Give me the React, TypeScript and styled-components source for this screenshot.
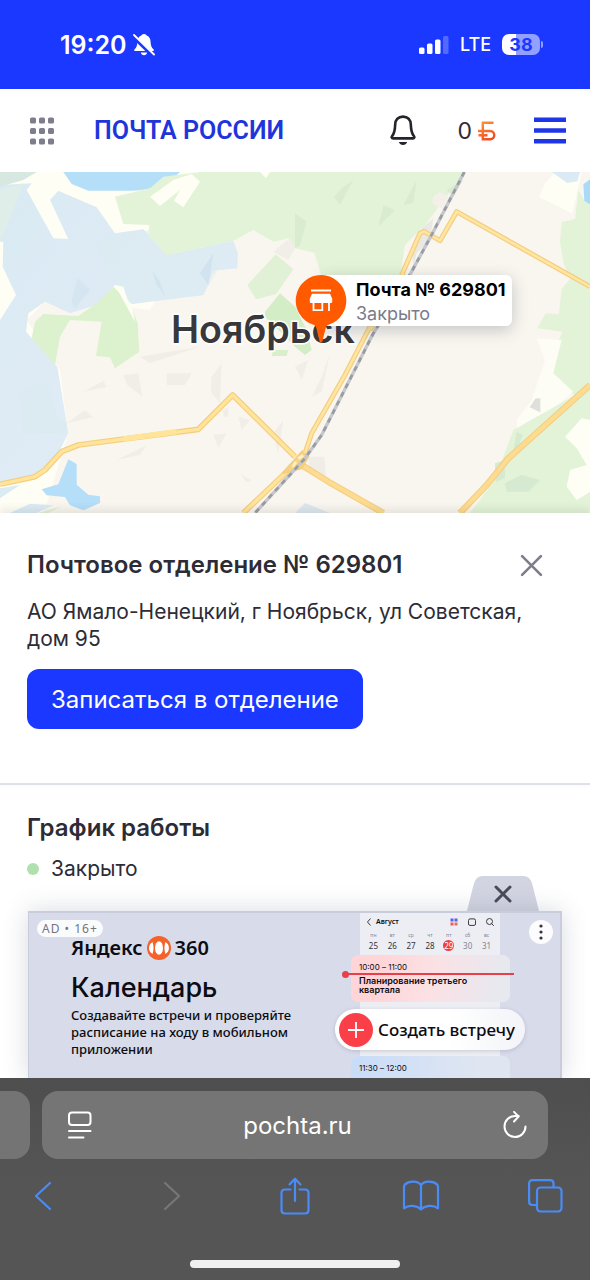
import React from "react";
import styled, { createGlobalStyle } from "styled-components";

const BLUE = "#1a38ff";
const INK = "#2d2c36";
const UI_FONT = `Inter, "Noto Sans", sans-serif`;
const AD_FONT = `"Noto Sans", "Open Sans", sans-serif`;

const GlobalStyle = createGlobalStyle`
  *, *::before, *::after { box-sizing: border-box; }
  body { margin: 0; background: #fff; color: ${INK}; font-family: ${UI_FONT}; }
  h1, h2, p { margin: 0; }
  button { padding: 0; border: 0; background: none; color: inherit; font: inherit; cursor: pointer; }
  svg { display: block; flex: none; }
`;

const Screen = styled.div`
  display: flex;
  flex-direction: column;
  height: 100vh;
`;

/* Phone status bar */

const StatusBar = styled.div`
  display: flex;
  align-items: center;
  justify-content: space-between;
  flex: none;
  height: 89px;
  padding: 0 47px 0 60px;
  background: ${BLUE};
  color: #fff;
`;

const StatusGroup = styled.div<{ $gap: number }>`
  display: flex;
  align-items: center;
  gap: ${(p) => p.$gap}px;
`;

const Clock = styled.time`
  font-size: 25px;
  font-weight: 600;
`;

const Network = styled.span`
  font-size: 18px;
  font-weight: 500;
`;

const Battery = styled.div`
  position: relative;
  width: 38px;
  height: 21px;
  margin-right: 3px;
  border-radius: 7px;
  background: linear-gradient(90deg, #fff 38%, #92a0ff 38%);
  color: ${BLUE};
  font-size: 18px;
  font-weight: 700;
  line-height: 21px;
  text-align: center;

  &::after {
    content: "";
    position: absolute;
    top: 7px;
    right: -3px;
    width: 2px;
    height: 7px;
    border-radius: 0 2px 2px 0;
    background: #92a0ff;
  }
`;

/* Site header */

const Header = styled.header`
  display: flex;
  align-items: center;
  flex: none;
  height: 83px;
  padding: 0 24px 0 30px;
  background: #fff;
`;

const Brand = styled.a`
  margin-left: 40px;
  color: #1f35dc;
  font-family: Roboto, sans-serif;
  font-size: 25px;
  font-weight: 600;
  line-height: 32px;
  text-decoration: none;
  white-space: nowrap;
`;

const HeaderActions = styled.div`
  display: flex;
  align-items: center;
  gap: 38px;
  margin-left: auto;
`;

const Bonus = styled.button`
  display: flex;
  align-items: center;
  gap: 6px;
  padding-left: 3px;
  font-size: 23px;
`;

/* Scrolling page and its map */

const Page = styled.div`
  position: relative;
  flex: 1;
  min-height: 0;
  overflow: hidden;
`;

const MapArea = styled.section`
  position: relative;

  > svg { width: 100%; height: auto; }
`;

const Marker = styled.button`
  position: absolute;
  top: 103px;
  left: 50%;
  display: flex;
  text-align: left;
`;

const MarkerPin = styled.span`
  position: relative;
  z-index: 1;
  width: 52px;
  height: 68px;
`;

const MarkerLabel = styled.span`
  display: flex;
  flex-direction: column;
  height: 51px;
  margin-left: -26px;
  padding: 3px 6px 0 35px;
  border-radius: 6px;
  background: #fff;
  box-shadow: 0 4px 16px rgba(40, 50, 80, 0.25);
  white-space: nowrap;
`;

const MarkerTitle = styled.strong`
  color: #000;
  font-size: 18px;
  font-weight: 700;
  line-height: 24px;
`;

const MarkerState = styled.span`
  color: #7b7b8a;
  font-size: 18px;
  line-height: 24px;
`;

/* Office card */

const Office = styled.section`
  position: relative;
  padding: 36px 28px 54px 27px;
  border-bottom: 2px solid #dfe1ea;
  background: #fff;
  box-shadow: 0 -4px 8px rgba(60, 60, 60, 0.1);
`;

const OfficeHead = styled.div`
  display: flex;
  align-items: center;
  justify-content: space-between;
  padding-right: 19px;
`;

const Title = styled.h2`
  font-size: 24px;
  font-weight: 600;
  line-height: 32px;
`;

const Address = styled.p`
  margin: 17px 0;
  font-size: 21px;
  line-height: 27px;
`;

const BookButton = styled.button`
  height: 60px;
  padding: 0 24px;
  border-radius: 12px;
  background: ${BLUE};
  color: #fff;
  font-size: 24px;
`;

const Schedule = styled.section`
  padding: 27px;
`;

const OpenState = styled.p`
  display: flex;
  align-items: center;
  gap: 12px;
  margin-top: 12px;
  font-size: 21px;
  line-height: 26px;

  &::before {
    content: "";
    width: 12px;
    height: 12px;
    border-radius: 50%;
    background: #b0e0ae;
  }
`;

/* Advertisement pinned over the page */

const AdDock = styled.aside`
  position: absolute;
  right: 28px;
  bottom: 0;
  left: 28px;
  display: flex;
  flex-direction: column;
  height: 202px;
`;

const AdClose = styled.button`
  align-self: flex-end;
  margin-right: 23px;
`;

const AdBody = styled.div`
  display: flex;
  justify-content: space-between;
  position: relative;
  flex: 1;
  min-height: 0;
  padding: 0 60px 0 42px;
  border: solid #c9cddb;
  border-width: 2px 2px 0 1px;
  background: #d8dbe9;
  box-shadow: 0 0 24px rgba(60, 70, 100, 0.2);
  font-family: ${AD_FONT};
  color: #0c0c12;
`;

const AdTag = styled.span`
  position: absolute;
  top: 7px;
  left: 8px;
  padding: 0 5px;
  border-radius: 9px;
  background: #fafbfd;
  color: #74747c;
  font-size: 12px;
  letter-spacing: 1px;
  line-height: 17px;
`;

const AdMenu = styled.button`
  position: absolute;
  top: 7px;
  right: 7px;
`;

const AdCopy = styled.div`
  padding-top: 21px;
`;

const AdBrand = styled.div`
  display: flex;
  align-items: center;
  gap: 4px;
  font-size: 20px;
  font-weight: 600;
  line-height: 28px;
`;

const AdTitle = styled.h2`
  margin: 10px 0 3px;
  font-family: ${UI_FONT};
  font-size: 27px;
  font-weight: 500;
  line-height: 32px;
`;

const AdText = styled.p`
  width: 240px;
  font-size: 13px;
  font-weight: 500;
  line-height: 17px;
`;

const Phone = styled.div`
  display: flex;
  flex-direction: column;
  align-items: stretch;
  width: 140px;
  height: 100%;
  background: #eceef3;
`;

const PhoneHead = styled.div`
  display: flex;
  align-items: center;
  gap: 4px;
  padding: 3px 6px 0;
  font-size: 7px;
  font-weight: 600;
  line-height: 12px;
`;

const PhoneTools = styled.span`
  display: flex;
  gap: 10px;
  margin-left: auto;
`;

const Week = styled.table`
  width: 132px;
  margin: 3px 4px 2px;
  border-collapse: collapse;
  table-layout: fixed;
  font-size: 8px;
  text-align: center;

  th { padding: 0; color: #85858f; font-size: 5px; font-weight: 400; line-height: 8px; }
  td { padding: 0; line-height: 14px; }
`;

const Day = styled.span<{ $today?: boolean; $weekend?: boolean }>`
  display: inline-block;
  width: 11px;
  border-radius: 50%;
  background: ${(p) => (p.$today ? "#ef3b45" : "transparent")};
  color: ${(p) => (p.$today ? "#fff" : p.$weekend ? "#85858f" : "#33333b")};
  line-height: 11px;
`;

const EventCard = styled.div<{ $tone: "red" | "blue" }>`
  position: relative;
  flex: none;
  height: 47px;
  margin: 0 -10px 0 -9px;
  padding: 7px 8px;
  border-radius: 7px;
  background: ${(p) =>
    p.$tone === "red"
      ? "linear-gradient(100deg, #ffd5d8 20%, #fbe1e4 50%, #e8e8ef 90%)"
      : "linear-gradient(100deg, #c8dcf8, #e0e6f1 80%)"};
  font-family: ${UI_FONT};
  font-size: 8px;
  line-height: 10px;
`;

const EventTime = styled.div`
  margin-bottom: 4px;
`;

const EventName = styled.strong`
  display: block;
  font-size: 9px;
  font-weight: 600;
  line-height: 9px;
`;

const NowLine = styled.span`
  position: absolute;
  top: 18px;
  right: -4px;
  left: -6px;
  height: 2px;
  background: #e8404a;

  &::before {
    content: "";
    position: absolute;
    top: -2px;
    left: -3px;
    width: 7px;
    height: 7px;
    border-radius: 50%;
    background: #e8404a;
  }
`;

const CreateButton = styled.button`
  display: flex;
  align-items: center;
  gap: 5px;
  flex: none;
  height: 41px;
  margin: 7px -25px 6px -25px;
  padding: 0 4px;
  border-radius: 21px;
  background: linear-gradient(90deg, #fff 60%, #f3f4f8);
  box-shadow: 0 1px 4px rgba(60, 60, 90, 0.2);
  font-size: 17px;
  font-weight: 500;
  white-space: nowrap;
`;

/* Browser controls */

const BrowserBar = styled.footer`
  display: flex;
  flex-direction: column;
  flex: none;
  gap: 17px;
  height: 202px;
  padding: 13px 0 12px;
  background: linear-gradient(#4e4e4e 0, #555 50%);
`;

const TabStrip = styled.div`
  display: flex;
  gap: 12px;
  padding-right: 42px;
`;

const PreviousTab = styled.div`
  width: 30px;
  height: 68px;
  border-radius: 0 16px 16px 0;
  background: #747474;
`;

const AddressBar = styled.div`
  display: flex;
  align-items: center;
  flex: 1;
  min-width: 0;
  height: 68px;
  padding: 0 20px 0 25px;
  border-radius: 16px;
  background: #757575;
  color: #fff;
`;

const UrlInput = styled.input`
  flex: 1;
  min-width: 0;
  border: 0;
  outline: 0;
  background: none;
  color: #fff;
  font-family: ${UI_FONT};
  font-size: 24px;
  text-align: center;
`;

const Toolbar = styled.nav`
  display: flex;
  align-items: center;
  justify-content: space-between;
  height: 40px;
  padding: 0 25px;
  color: #4a8cf7;
`;

const ToolButton = styled.button`
  display: flex;
  justify-content: center;
  width: 38px;

  &:disabled { color: #777; }
`;

const HomeIndicator = styled.div`
  align-self: center;
  width: 210px;
  height: 8px;
  margin-top: auto;
  border-radius: 4px;
  background: #f0f0f0;
`;

const MutedBell = () => (
  <svg width="22" height="23" viewBox="0 0 22 23" fill="none">
    <path d="M11 1c-1.600 0-2.300.8-2.700 1.500C5.500 3.400 4.500 6 4.400 9c-.2 4-1 5.500-2.800 7.200-.8.800-.4 1.800.6 1.800h17.600c1 0 1.400-1 .6-1.800-1.800-1.700-2.600-3.200-2.800-7.200-.1-3-1.100-5.600-3.900-6.500C13.300 1.800 12.600 1 11 1Z" fill="#fff" />
    <path d="M7.800 19.500h6.400c-.4 1.800-1.600 2.700-3.200 2.700s-2.800-.9-3.200-2.700Z" fill="#fff" />
    <path d="M0 3.200 20 22.500" stroke={BLUE} strokeWidth="4.200" />
    <path d="m1 2 20 19.500" stroke="#fff" strokeWidth="1.800" strokeLinecap="round" />
  </svg>
);

const Signal = () => (
  <svg width="30" height="20" viewBox="0 0 30 20" fill="#fff">
    <rect x="0" y="12.500" width="5.500" height="6.500" rx="1.500" />
    <rect x="8" y="8.500" width="5.500" height="10.500" rx="1.500" />
    <rect x="16" y="4.500" width="5.500" height="14.500" rx="1.500" />
    <rect x="24" y="1" width="5.500" height="18" rx="1.500" opacity=".25" />
  </svg>
);

const AppsIcon = () => (
  <svg width="24" height="28" viewBox="0 0 24 28" fill="#7d7d8c">
    {[0, 9, 18].map((x) =>
      [0.5, 11, 21.5].map((y) => <rect key={`${x}-${y}`} x={x} y={y} width="6" height="6" rx="1.600" />)
    )}
  </svg>
);

const BellIcon = () => (
  <svg width="26" height="31" viewBox="0 0 26 31" fill="none">
    <path d="M13 1.600c-4.800 0-7.600 3.200-7.800 7.800-.2 5.600-.6 8.600-2.900 11.400-1.200 1.500-.6 2.600.8 2.600h19.800c1.400 0 2-1.100.8-2.600-2.300-2.800-2.700-5.800-2.900-11.400-.2-4.600-3-7.800-7.800-7.800Z" stroke="#24242c" strokeWidth="2.600" strokeLinejoin="round" />
    <path d="M8.800 27h8.400c-.8 1.900-2.200 3-4.200 3s-3.400-1.100-4.200-3Z" fill="#24242c" />
  </svg>
);

const BonusIcon = () => (
  <svg width="18" height="20" viewBox="0 0 18 20" fill="none" stroke="url(#bonus)" strokeWidth="2.400">
    <defs>
      <linearGradient id="bonus" gradientUnits="userSpaceOnUse" x1="0" y1="0" x2="10" y2="20">
        <stop stopColor="#ff9a3c" />
        <stop offset="1" stopColor="#f04a24" />
      </linearGradient>
    </defs>
    <path d="M15.500 1.800H4.800v16.400h7.400c5.400 0 5.400-8.200 0-8.200H0M.5 14.300h9" />
  </svg>
);

const MenuIcon = () => (
  <svg width="32" height="27" viewBox="0 0 32 27" fill="#1f35e8">
    <path d="M0 .5h32V5H0zM0 11.300h32v4.500H0zM0 22h32v4.500H0z" />
  </svg>
);

const CloseIcon = ({ size, color, weight }: { size: number; color: string; weight: number }) => (
  <svg width={size} height={size} viewBox="0 0 22 22" fill="none" stroke={color} strokeWidth={weight} strokeLinecap="round">
    <path d="m2 2 18 18M20 2 2 20" />
  </svg>
);

const CityMap = () => (
  <svg viewBox="0 6 1770 1023" role="img" aria-label="Карта Ноябрьска">
    <defs>
      <linearGradient id="lake" x2="1" y2="1">
        <stop stopColor="#d9eaf3" />
        <stop offset=".5" stopColor="#dfebf5" />
        <stop offset="1" stopColor="#dcebf2" />
      </linearGradient>
    </defs>
    <rect width="1770" height="1035" fill="#f9f6ef" />
    <path d="M0 0h700L450 420 150 380 80 450 180 600 205 790 130 1035H0Z" fill="#fefef5" />
    <path d="M0 45 95 40 80 60 160 205 205 207 150 90 175 62 290 112 345 190 430 178 500 255 700 212 714 250 712 295 640 302 610 375 395 402 345 345 290 405 210 430 135 395 85 430 78 485 172 590 205 790 175 850 120 915 0 945V450L48 375 8 290 10 215H0Z" fill="url(#lake)" />
    <path d="M0 6h110L70 30 0 50Z" fill="#d6e8df" />
    <path d="M0 60 70 40 40 120 0 215Z" fill="#dfeee8" />
    <path d="M60 660 140 640 170 740 200 760 200 790 70 790Z" fill="#d9e9f0" opacity=".5" />
    <path d="M290 210 450 180 500 258 700 215 610 375 395 402 345 345Z" fill="#dbebf0" opacity=".5" />
    <path d="M232 325 270 360 225 415 215 395Z" fill="#cddff0" opacity=".5" />
    <path d="M640 250 625 345 600 310Z" fill="#c9dcef" opacity=".6" />
    <path d="M455 300 470 345 495 378 480 335Z" fill="#cddff0" opacity=".6" />
    <path d="M190 6h350c-40 40-90 56-150 56H265L215 42Z" fill="#b5def8" />
    <path d="M345 80 450 55 490 20 600 6H1395L1275 165 1215 225 1200 320H965L943 248 885 235 865 205 820 215 760 180 700 212 500 256 445 195 448 165 370 162Z" fill="#e3f3d8" />
    <path d="M450 80 520 30 575 12 600 35 550 112 522 92 540 60 480 108ZM780 6h30L798 25Z" fill="#fefef5" />
    <path d="m1030 50 30-20-40 75-18-25ZM1210 105l40-75-10 70ZM1135 170l15-65 35 15ZM885 130l35 25-20 70-15 10ZM1340 60l50-30-30 50Z" fill="#daecd0" />
    <path d="m1300 80 20-14 25 14-13 40-35-20Z" fill="#f4f0e9" />
    <path d="m742 345 85-92 53 45-52 75-60 15Z" fill="#e1f1d5" />
    <path d="m795 425 45-55 45 40 35 70 15 60-20 15-30-25-40-40-50-50Z" fill="#d3eec6" />
    <path d="M820 540h45l-5 18h-45Z" fill="#d8efcb" />
    <path d="M130 432 235 438 290 400 340 350 390 400 413 460 418 545 345 595 330 562 288 558 305 455 210 450 180 500 165 585 95 505 105 455Z" fill="#dcf2ce" />
    <path d="m345 345 25 5 15 45 10 10 10 50Z" fill="#fefef5" />
    <path d="m205 868 25 14v62l35 30 35 5v20l-50 22-40-15-15-25-55-5-15-18 50-15Z" fill="#b5def8" />
    <path d="M0 955 60 945 0 985ZM30 1029l60-28 70 5-50 23Z" fill="#dbebf4" />
    <path d="m115 1029 70-20-40 20Z" fill="#dff1d3" />
    <path d="M250 665 310 632 320 650ZM370 615l45-5 12 70-45-35ZM500 610h75l-20 35h-55ZM635 620l30-40-5 120-28-35ZM350 870l90-45-20 30ZM720 910l35 22-15 5ZM420 560l180-30-150 50ZM200 760l55-40 25 22ZM640 795l40-5-25 45ZM715 740l35 10-25 30ZM820 790l30-40-15 100ZM670 720l15-10v30h-15Z" fill="#f1eee8" />
    <path d="M850 220 870 205 884 235 865 270 820 245ZM885 590l40-20-20 60ZM935 680l30-60 25-70-25 115Z" fill="#f1eee7" />

    <g transform="translate(885 0)">
      <path d="M750 40 780 6h80l-8 35-20 90-40-20-60-30Z" fill="#fefef5" />
      <path d="M770 6h85l-8 28-30 5Z" fill="#dbeaf5" />
      <path d="m850 60 20 35 15 5v600l-55-30-65-60 12-65 25-60-75-10 25-45 40 2 8-75 25-30-20-50-10-60 5-60 40-10Z" fill="#e2f3d7" />
      <path d="m865 43 20-15v75l-17-10Z" fill="#a9dbf9" />
      <path d="m725 505 75 5-25 100 60 55-115 95-50 40-5-50 45-60 40-120Z" fill="#fdfdf5" />
      <path d="M655 780 885 650V1035H520L600 930Z" fill="#e2f3d7" />
      <path d="m810 800 50-55 25 5v150l10 60-50 30-30-40 10-50 50-15-30-50Z" fill="#fefef5" />
      <path d="m630 940 50-25 55 15-35 35h-65ZM600 880l30-10v55l-28 10ZM665 785l18 10-15 40-15 20Z" fill="#d5ead0" />
      <path d="M722 685h14v42l-32-15Z" fill="#e0dfdb" />
      <path d="m0 1029 30-30 75 30Z" fill="#dde8ee" />
      <path d="M385 170 415 145 405 210 365 250 355 290 350 240Z" fill="#e2e2de" opacity=".7" />
      <path d="M38 860h50l5 60-45-5Z" fill="#f0ede6" />

      <g fill="none" strokeLinejoin="round">
        <g stroke="#f4cd7f">
          <path d="m320 315 55-125 12-6 48 28 50-87 400 225M225 470 150 615 50 790 30 850" strokeWidth="15" />
          <path d="m325 310-100 170" strokeWidth="15" />
          <path d="M885 645 640 865 575 945 495 1029M20 885l80 50 165 94" strokeWidth="19" />
        </g>
        <g stroke="#fee6a1">
          <path d="m320 315 55-125 12-6 48 28 50-87 400 225M225 470 150 615 50 790 30 850" strokeWidth="8" />
          <path d="m325 310-100 170" strokeWidth="8" />
          <path d="M885 645 640 865 575 945 495 1029M20 885l80 50 165 94" strokeWidth="13" stroke="#fddb90" />
        </g>
      </g>
    </g>

    <g fill="none" strokeLinejoin="round">
      <path d="M0 943 105 920 135 900 185 845 235 825 595 778 698 675 885 860M730 1029 850 915 915 845" stroke="#f4cd7f" strokeWidth="17" />
      <path d="M0 943 105 920 135 900 185 845 235 825 595 778 698 675 885 860M730 1029 850 915 915 845" stroke="#ffe49a" strokeWidth="10" />
      <path d="m370 807 160-22" stroke="#ffe49a" strokeWidth="16" />
      <path d="m850 910 55-65 20 15-20 35-40 10Z" fill="#fbd37d" stroke="#f4cd7f" strokeWidth="5" />
      <path d="m878 890 10-14M895 866l14-10" stroke="#fff3cc" strokeWidth="8" />
      <path d="M1393 6 1292 200 1232 310 1120 490 965 795 915 865 765 1029" stroke="#c5c7cc" strokeWidth="10" />
      <path d="M1393 6 1292 200 1232 310 1120 490 965 795 915 865 765 1029" stroke="#999ca2" strokeWidth="8" strokeDasharray="15 14" />
    </g>

    <text x="513" y="520" fill="#38383b" stroke="#fff" strokeWidth="9" paintOrder="stroke" fontFamily="Inter, sans-serif" fontSize="113" fontWeight="600">
      Ноябрьск
    </text>
  </svg>
);

const OfficePin = () => (
  <svg width="52" height="68" viewBox="0 0 52 68">
    <path d="M26 0a25.500 25.500 0 0 1 7.500 49.800c-2.200.8-2.600 2-3 4L27.500 66c-.4 2-2.600 2-3 0l-3-12.200c-.4-2-.8-3.200-3-4A25.500 25.500 0 0 1 26 0Z" fill="#ff5a00" />
    <path d="M16 14.500h20v2H16z" fill="#fff" />
    <path d="M17 18.800h18l2.200 5v2.600c0 1-.8 1.600-1.700 1.600h-19c-1 0-1.700-.6-1.700-1.600v-2.600Z" fill="#fff" />
    <path d="M18.500 27v8.200h8.800V27M34 27v8.900" stroke="#fff" strokeWidth="1.800" fill="none" />
  </svg>
);

const AdCloseTab = () => (
  <svg width="72" height="35" viewBox="0 0 72 35">
    <path d="M0 35 6.500 9C8 3 11 0 16 0h40c5 0 8 3 9.500 9L72 35Z" fill="#d2d5e1" />
    <path d="m29 11 14 14M43 11 29 25" stroke="#4a4b58" strokeWidth="3" strokeLinecap="round" />
  </svg>
);

const KebabIcon = () => (
  <svg width="24" height="24" viewBox="0 0 24 24">
    <circle cx="12" cy="12" r="12" fill="#fcfcfe" />
    <g fill="#34343c">
      <circle cx="12" cy="6" r="1.600" />
      <circle cx="12" cy="12" r="1.600" />
      <circle cx="12" cy="18" r="1.600" />
    </g>
  </svg>
);

const Yandex360Icon = () => (
  <svg width="24" height="24" viewBox="0 0 24 24">
    <circle cx="12" cy="12" r="12" fill="#f4622a" />
    <ellipse cx="12" cy="12" rx="4" ry="6.800" fill="#fff" />
    <path d="M5.500 6c-4.600 2.600-4.600 9.400 0 12 1.400-3.600 1.400-8.400 0-12ZM18.500 6c4.600 2.600 4.600 9.400 0 12-1.400-3.600-1.400-8.400 0-12Z" fill="#fff" />
  </svg>
);

const ViewsIcon = () => (
  <svg width="8" height="8" viewBox="0 0 8 8">
    <path d="M.5.5h3v3h-3zM4.500.5h3v3h-3z" fill="#5863e8" />
    <path d="M.5 4.500h3v3h-3z" fill="#ee5a62" />
    <path d="M4.500 4.500h3v3h-3z" fill="#e0705c" />
  </svg>
);

const DayIcon = () => (
  <svg width="8" height="8" viewBox="0 0 8 8" fill="none" stroke="#3b3b44">
    <rect x=".5" y=".9" width="7" height="6.500" rx="1.500" />
  </svg>
);

const SearchIcon = () => (
  <svg width="8" height="8" viewBox="0 0 8 8" fill="none" stroke="#3b3b44">
    <circle cx="3.500" cy="3.500" r="3" />
    <path d="m5.600 5.600 2.200 2.200" />
  </svg>
);

const BackSmall = () => (
  <svg width="6" height="8" viewBox="0 0 6 8" fill="none" stroke="#3b3b44">
    <path d="M4.500.5 1.500 4l3 3.500" />
  </svg>
);

const PlusBadge = () => (
  <svg width="34" height="34" viewBox="0 0 34 34">
    <circle cx="17" cy="17" r="17" fill="#fb3f48" />
    <path d="M17 9v16M9 17h16" stroke="#fff" strokeWidth="1.800" />
  </svg>
);

const PageMenuIcon = () => (
  <svg width="26" height="28" viewBox="0 0 26 28" fill="none" stroke="#fff" strokeWidth="2" strokeLinecap="round">
    <rect x="2" y="1.500" width="21.500" height="12.500" rx="3" />
    <path d="M2 20h21.500M2 26.500h14.500" />
  </svg>
);

const ReloadIcon = () => (
  <svg width="26" height="28" viewBox="0 0 26 28" fill="none" stroke="#fff" strokeWidth="2" strokeLinecap="round" strokeLinejoin="round">
    <path d="M23.500 15.500A10.500 10.500 0 1 1 13 5h3.800M12 .9l4.600 4.600-4.600 5" />
  </svg>
);

const toolStroke = { fill: "none", stroke: "currentColor", strokeWidth: 2.2, strokeLinecap: "round", strokeLinejoin: "round" } as const;

const Chevron = ({ forward }: { forward?: boolean }) => (
  <svg width="36" height="30" viewBox="0 0 36 30" {...toolStroke}>
    <path d={forward ? "m13 2 14 13-14 13" : "M24 2 10 15l14 13"} />
  </svg>
);

const ShareIcon = () => (
  <svg width="36" height="38" viewBox="0 0 36 38" {...toolStroke}>
    <path d="M13.500 12.500H8c-2.300 0-3.500 1.200-3.500 3.500v17c0 2.300 1.200 3.500 3.500 3.500h20c2.300 0 3.500-1.200 3.500-3.500V16c0-2.300-1.200-3.500-3.500-3.500h-5.500M18 24V2M12.500 7.500 18 1.700l5.500 5.800" />
  </svg>
);

const BookIcon = () => (
  <svg width="38" height="32" viewBox="0 0 38 32" {...toolStroke}>
    <path d="M19 5c-3-4.300-12-4.600-16-.6-.8.800-1 1.300-1 2.300v21.600c4.600-3.600 13-3.200 17 1.200 4-4.400 12.400-4.800 17-1.200V6.700c0-1-.2-1.500-1-2.300C31 .4 22 .7 19 5v24.500" />
  </svg>
);

const TabsIcon = () => (
  <svg width="36" height="34" viewBox="0 0 36 34" {...toolStroke}>
    <path d="M8 26H4.500C2.200 26 1.100 24.800 1.100 22.500v-18c0-2.300 1.100-3.400 3.400-3.400H22c2.300 0 3.500 1.100 3.500 3.400V8" />
    <rect x="9" y="8.500" width="24.500" height="24" rx="3.500" />
  </svg>
);

const weekdays = ["пн", "вт", "ср", "чт", "пт", "сб", "вс"];
const days = [25, 26, 27, 28, 29, 30, 31];

export default function App() {
  return (
    <Screen>
      <GlobalStyle />
      <StatusBar>
        <StatusGroup $gap={6}>
          <Clock>19:20</Clock>
          <MutedBell />
        </StatusGroup>
        <StatusGroup $gap={11}>
          <Signal />
          <Network>LTE</Network>
          <Battery>38</Battery>
        </StatusGroup>
      </StatusBar>

      <Header>
        <button aria-label="Сервисы"><AppsIcon /></button>
        <Brand href="#">ПОЧТА РОССИИ</Brand>
        <HeaderActions>
          <button aria-label="Уведомления"><BellIcon /></button>
          <Bonus aria-label="Бонусы">0 <BonusIcon /></Bonus>
          <button aria-label="Меню"><MenuIcon /></button>
        </HeaderActions>
      </Header>

      <Page>
        <MapArea>
          <CityMap />
          <Marker>
            <MarkerPin><OfficePin /></MarkerPin>
            <MarkerLabel>
              <MarkerTitle>Почта № 629801</MarkerTitle>
              <MarkerState>Закрыто</MarkerState>
            </MarkerLabel>
          </Marker>
        </MapArea>

        <Office>
          <OfficeHead>
            <Title as="h1">Почтовое отделение № 629801</Title>
            <button aria-label="Закрыть"><CloseIcon size={23} color="#7d7d8c" weight={2.5} /></button>
          </OfficeHead>
          <Address>АО Ямало-Ненецкий, г Ноябрьск, ул Советская, дом 95</Address>
          <BookButton>Записаться в отделение</BookButton>
        </Office>

        <Schedule>
          <Title>График работы</Title>
          <OpenState>Закрыто</OpenState>
        </Schedule>

        <AdDock>
          <AdClose aria-label="Закрыть рекламу"><AdCloseTab /></AdClose>
          <AdBody>
            <AdCopy>
              <AdBrand>Яндекс <Yandex360Icon /> 360</AdBrand>
              <AdTitle>Календарь</AdTitle>
              <AdText>Создавайте встречи и проверяйте расписание на ходу в мобильном приложении</AdText>
            </AdCopy>
            <Phone>
              <PhoneHead>
                <BackSmall /> Август
                <PhoneTools><ViewsIcon /><DayIcon /><SearchIcon /></PhoneTools>
              </PhoneHead>
              <Week>
                <thead>
                  <tr>{weekdays.map((d) => <th key={d}>{d}</th>)}</tr>
                </thead>
                <tbody>
                  <tr>
                    {days.map((d) => (
                      <td key={d}><Day $today={d === 29} $weekend={d > 29}>{d}</Day></td>
                    ))}
                  </tr>
                </tbody>
              </Week>
              <EventCard $tone="red">
                <EventTime>10:00 – 11:00</EventTime>
                <EventName>Планирование третьего квартала</EventName>
                <NowLine />
              </EventCard>
              <CreateButton><PlusBadge /> Создать встречу</CreateButton>
              <EventCard $tone="blue">
                <EventTime>11:30 – 12:00</EventTime>
              </EventCard>
            </Phone>
            <AdTag>AD • 16+</AdTag>
            <AdMenu aria-label="О рекламе"><KebabIcon /></AdMenu>
          </AdBody>
        </AdDock>
      </Page>

      <BrowserBar>
        <TabStrip>
          <PreviousTab />
          <AddressBar>
            <button aria-label="Меню страницы"><PageMenuIcon /></button>
            <UrlInput aria-label="Адрес" defaultValue="pochta.ru" />
            <button aria-label="Обновить"><ReloadIcon /></button>
          </AddressBar>
        </TabStrip>
        <Toolbar>
          <ToolButton aria-label="Назад"><Chevron /></ToolButton>
          <ToolButton aria-label="Вперёд" disabled><Chevron forward /></ToolButton>
          <ToolButton aria-label="Поделиться"><ShareIcon /></ToolButton>
          <ToolButton aria-label="Закладки"><BookIcon /></ToolButton>
          <ToolButton aria-label="Вкладки"><TabsIcon /></ToolButton>
        </Toolbar>
        <HomeIndicator />
      </BrowserBar>
    </Screen>
  );
}
